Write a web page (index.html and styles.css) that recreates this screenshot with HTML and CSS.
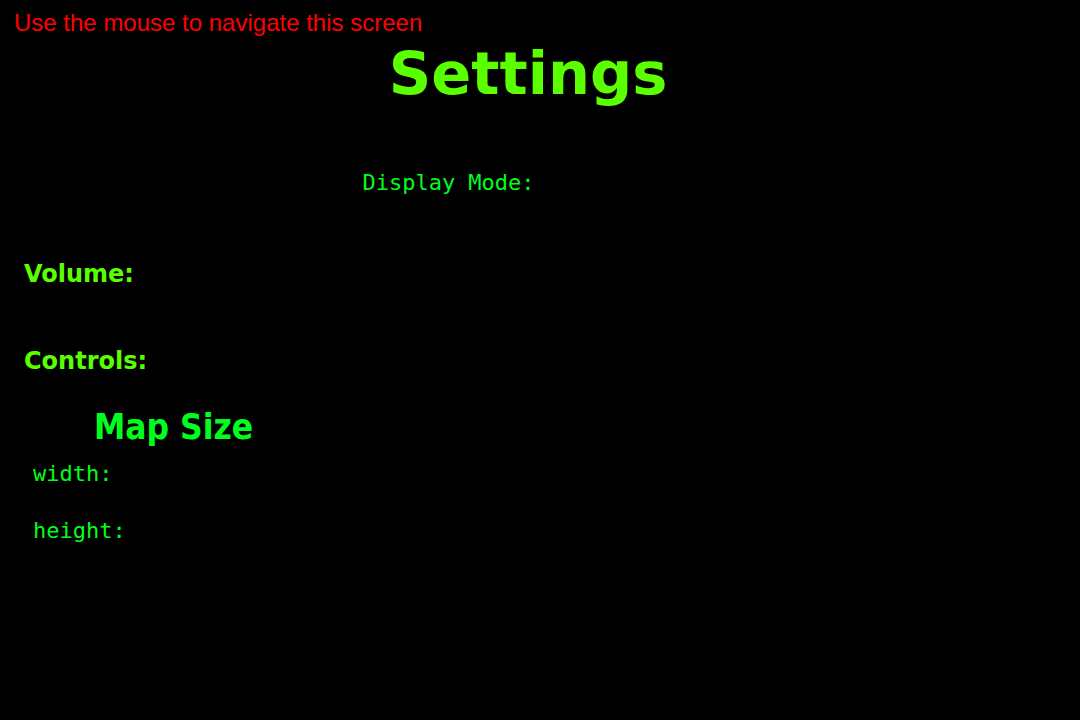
FILE: index.html
```html
<!DOCTYPE html>
<html lang="en">
<head>
<meta charset="utf-8">
<title>Settings</title>
<link rel="stylesheet" href="styles.css">
</head>
<body>
<main class="screen">
  <p class="hint">Use the mouse to navigate this screen</p>
  <h1 class="title">Settings</h1>
  <p class="display-mode">Display Mode:</p>
  <section class="options">
    <h2 class="option">Volume:</h2>
    <h2 class="option">Controls:</h2>
  </section>
  <section class="map">
    <h2 class="map-title">Map Size</h2>
    <p class="map-field">width:</p>
    <p class="map-field">height:</p>
  </section>
</main>
</body>
</html>
```

FILE: styles.css
```css
* { box-sizing: border-box; }
body { margin: 0; background: #000; color: #00ff1e; }
h1, h2, p { margin: 0; font-weight: 400; }
.screen { display: flex; flex-direction: column; min-height: 100vh; padding: 8px 24px; }
.hint { margin-left: -10px; font: 24px/30px "Liberation Sans", Arial, sans-serif; color: #f00; }
.title { align-self: center; padding-right: 24px; font: 700 59px/72px "DejaVu Sans", sans-serif; color: #5aff00; }
.display-mode { align-self: center; margin-top: 57px; padding-right: 183px; font: 22px/32px "DejaVu Sans Mono", monospace; }
.options { display: grid; gap: 55px; margin-top: 59px; }
.option { font: 700 24px/32px "DejaVu Sans", sans-serif; color: #5aff00; }
.map { display: grid; justify-items: start; margin-top: 30px; padding-left: 9px; }
.map-title { padding-left: 61px; font: 700 35px/40px "DejaVu Sans Condensed", "DejaVu Sans", sans-serif; }
.map-field { margin-top: 11px; font: 22px/32px "DejaVu Sans Mono", monospace; }
.map-field + .map-field { margin-top: 25px; }
```
